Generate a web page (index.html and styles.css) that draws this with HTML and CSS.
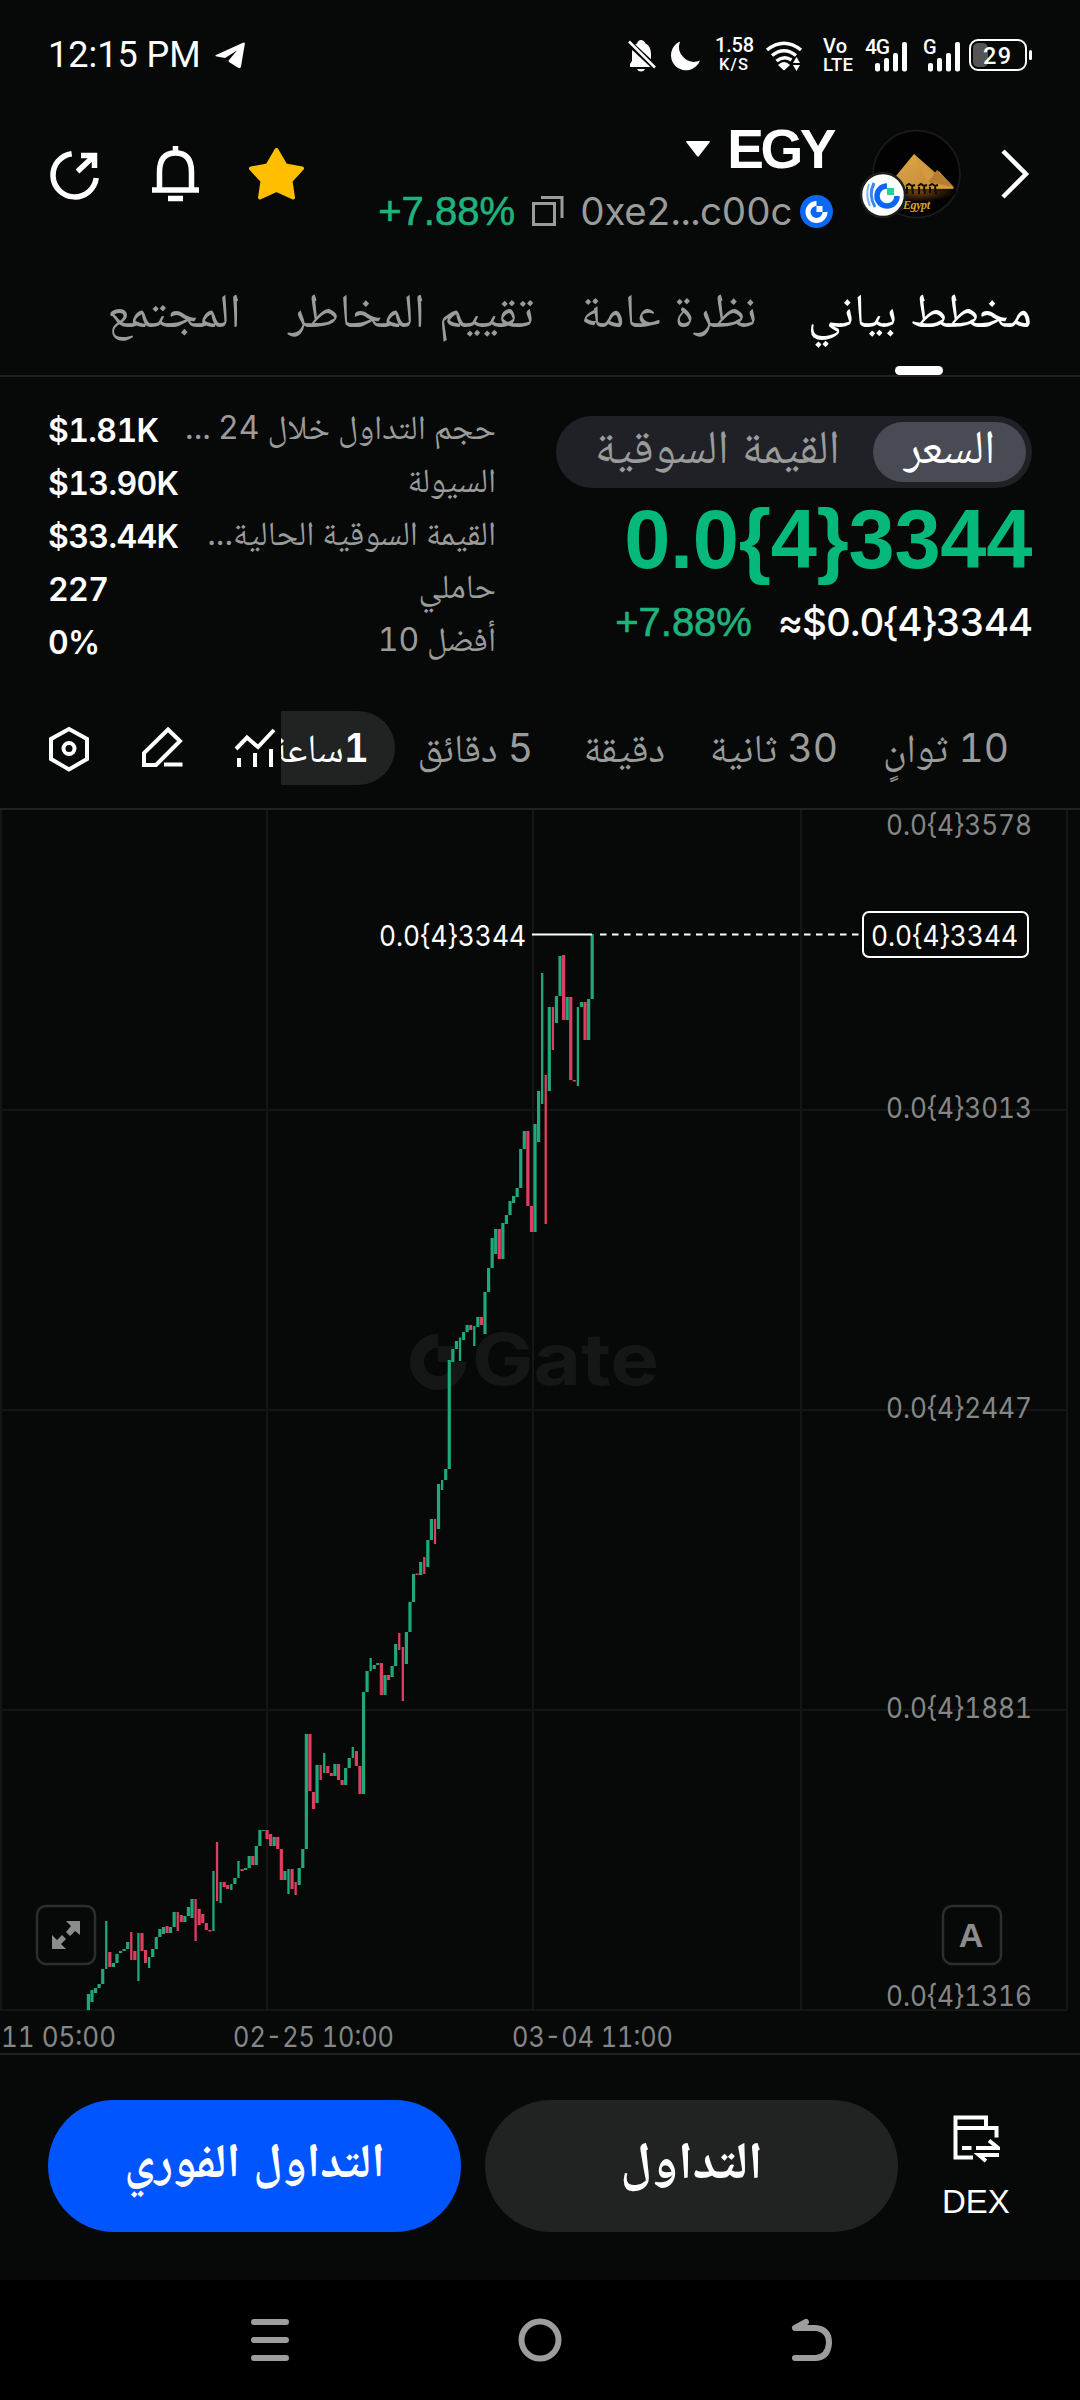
FILE: index.html
```html
<!DOCTYPE html>
<html lang="ar">
<head>
    <meta charset="UTF-8">
    <meta name="viewport" content="width=device-width, initial-scale=1.0">
    <title>EGY</title>
    <link rel="stylesheet" href="styles.css">
</head>
<body>
    <div class="status-bar">
        <span class="clock">12:15 PM</span>
        <svg class="telegram" width="30" height="27" viewBox="0 0 30 27"><path d="M1 13 L28 .8 Q30 0 29.8 2 L26 24.500 Q25.500 27 23 25.700 L14 20 Q13 19 14 18 L22 8.500 L10 16 L2 14.600 Q-.5 14 1 13Z" fill="#fff"/></svg>
        <svg class="status-icons" width="412" height="40" viewBox="624 34 412 40">
            <g fill="#fff">
                <path d="M630 66 V63 L632 60 V51 Q632 45 637 42.500 Q638 39 641 39 Q644 39 645.500 42.500 Q651 45 651 53 V60 L654 64 V66Z"/>
                <path d="M637 68 H645 Q644 70.500 641 70.500 Q638 70.500 637 68Z"/>
                <path d="M680 40.500 A15 15 0 1 0 700 59.500 A15 15 0 0 1 680 40.500Z"/>
                <path d="M778 64 Q784 58 790 64 L784 69.500Z"/>
                <path d="M796.500 56 L800 62 H793Z M796.500 70 L800 64 H793Z"/>
                <rect x="875" y="62" width="5" height="8.500" rx="2"/><rect x="884" y="57" width="5" height="13.500" rx="2"/><rect x="893" y="52" width="5" height="18.500" rx="2"/><rect x="902" y="41" width="5" height="29.500" rx="2"/>
                <rect x="928" y="62" width="5" height="8.500" rx="2"/><rect x="937" y="57" width="5" height="13.500" rx="2"/><rect x="946" y="52" width="5" height="18.500" rx="2"/><rect x="955" y="41" width="5" height="29.500" rx="2"/>
                <rect x="1029" y="49" width="3" height="10" rx="1.500"/>
            </g>
            <path d="M627 40 L656 67" stroke="#070908" stroke-width="6"/>
            <path d="M629 40.500 L655 66.500" stroke="#fff" stroke-width="2.500"/>
            <g fill="none" stroke="#fff" stroke-width="3.500">
                <path d="M767 49 Q784 35.500 801 49"/><path d="M772 54.500 Q784 45 796 54.500"/><path d="M776.500 60 Q784 54 791.500 59"/>
            </g>
            <rect x="973" y="42" width="15" height="24" rx="5" fill="#555"/>
            <rect x="970" y="39" width="56" height="30" rx="8" fill="none" stroke="#fff" stroke-width="2"/>
            <g class="status-text">
                <text x="715" y="51" font-size="20" textLength="39">1.58</text>
                <text x="719" y="69" font-size="16.500" textLength="29">K/S</text>
                <text x="823" y="52" font-size="20" textLength="24">Vo</text>
                <text x="823" y="70" font-size="18.500" textLength="30">LTE</text>
                <text x="865" y="53" font-size="21" textLength="25">4G</text>
                <text x="923" y="53" font-size="20">G</text>
                <text x="983" y="62.500" font-size="23.500" textLength="28">29</text>
            </g>
        </svg>
    </div>

    <header class="header">
        <svg class="actions" width="260" height="60" viewBox="48 144 260 60">
            <g fill="none" stroke="#fff" stroke-width="5.500">
                <path d="M71.700 153.700 A21.700 21.700 0 1 0 96.200 178"/>
                <path d="M77.500 171.500 L94 156"/><path d="M81 155.500 H94.500 V168"/>
                <path d="M159.500 190 V172 Q159.500 153 175.500 153 Q191.500 153 191.500 172 V190"/>
                <path d="M152 190 H199"/><path d="M168 198.500 H183"/><path d="M175.500 146 V153"/>
            </g>
            <path d="M276.500 150 L285.500 165.500 L302 168.500 L290.500 181 L293 197.500 L276.500 190 L260 197.500 L262.500 181 L251 168.500 L267.500 165.500Z" fill="#ffbf00" stroke="#ffbf00" stroke-width="4" stroke-linejoin="round"/>
        </svg>
        <div class="token">
            <div class="token-name">
                <svg width="24" height="16" viewBox="0 0 24 16"><path d="M1 0 H23 Q24.500 0 23.500 1.500 L13 15 Q12 16.300 11 15 L.5 1.500 Q-.5 0 1 0Z" fill="#fff"/></svg>
                <h1>EGY</h1>
            </div>
            <div class="token-info">
                <span class="change">+7.88%</span>
                <svg class="copy" width="32" height="31" viewBox="0 0 32 31"><path d="M1.500 7.500 H22.500 V28.500 H1.500Z M9 1.500 H30 V22" fill="none" stroke="#9a9c9b" stroke-width="3"/></svg>
                <span class="address">0xe2...c00c</span>
                <svg width="33" height="33" viewBox="0 0 33 33"><circle cx="16.500" cy="16.500" r="16.500" fill="#0a68f5"/><path d="M16.500 8.500 A8.500 8.500 0 1 0 25 17" fill="none" stroke="#fff" stroke-width="5"/><rect x="16.500" y="11" width="6" height="6" fill="#fff"/></svg>
            </div>
        </div>
        <svg class="avatar" width="102" height="94" viewBox="860 128 102 94">
            <defs>
                <linearGradient id="sand" x1="0" y1="0" x2="1" y2="1"><stop offset="0" stop-color="#e2ab4c"/><stop offset="1" stop-color="#bd8330"/></linearGradient>
                <radialGradient id="ground"><stop offset="0" stop-color="#6e4413"/><stop offset="1" stop-color="#000"/></radialGradient>
            </defs>
            <circle cx="916.500" cy="174" r="43.500" fill="#020202" stroke="#17191a" stroke-width="2"/>
            <ellipse cx="918" cy="192" rx="38" ry="10" fill="url(#ground)"/>
            <path d="M914 154 L891 182 V189 H954Z" fill="url(#sand)"/>
            <path d="M914 154 L930 188 H954 L939 171 L934 176Z" fill="#d39a40"/>
            <path d="M937 170 L928 182 L954 187Z" fill="#b67e30"/>
            <path d="M906 186 l3 -2 3 2 3 -1 M907 187 v7 M912 187 l1 7 M918 186 l3 -2 3 2 3 -1 M919 187 v7 M924 187 l1 7 M929 186 l3 -2 3 2 3 -1 M930 187 v6 M935 187 l1 7" fill="none" stroke="#120a02" stroke-width="2"/>
            <text class="avatar-text" x="903" y="209" textLength="27">Egypt</text>
            <circle cx="883" cy="195" r="22" fill="#fff" stroke="#1b1d1d" stroke-width="2.500"/>
            <g fill="none" stroke="#0a68f5">
                <path d="M869 184 Q865 195 870 206" stroke-width="2" opacity=".5"/>
                <path d="M874 183 Q868 195 875 207" stroke-width="3" opacity=".8"/>
                <path d="M887 186 A10 10 0 1 0 897 196" stroke-width="5.500"/>
            </g>
            <rect x="887" y="188" width="7" height="7" fill="#28cf95"/>
        </svg>
        <svg class="chevron" width="30" height="52" viewBox="0 0 30 52"><path d="M3 3 L26 26 L3 49" fill="none" stroke="#fff" stroke-width="4.500"/></svg>
    </header>

    <nav class="tabs">
        <a class="tab active" style="width: 223px">مخطط بياني</a>
        <a class="tab" style="width: 171px">نظرة عامة</a>
        <a class="tab" style="width: 241px">تقييم المخاطر</a>
        <a class="tab" style="width: 130px">المجتمع</a>
    </nav>

    <section class="summary">
        <div class="stats">
            <div class="stat"><b>$1.81K</b><span>حجم التداول خلال <i>24 ...</i></span></div>
            <div class="stat"><b>$13.90K</b><span>السيولة</span></div>
            <div class="stat"><b>$33.44K</b><span>القيمة السوقية الحالية<i>...</i></span></div>
            <div class="stat"><b>227</b><span>حاملي</span></div>
            <div class="stat"><b>0%</b><span>أفضل <i>10</i></span></div>
        </div>
        <div class="price-box">
            <div class="toggle">
                <span class="toggle-item active">السعر</span>
                <span class="toggle-item">القيمة السوقية</span>
            </div>
            <div class="price">0.0{4}3344</div>
            <div class="price-sub"><span class="change">+7.88%</span><span>≈$0.0{4}3344</span></div>
        </div>
    </section>

    <section class="toolbar">
        <svg class="tools" width="234" height="52" viewBox="46 722 234 52">
            <g fill="none" stroke="#fff" stroke-width="4">
                <path d="M69 729 L87 739 V759 L69 769.500 L51 759 V739Z"/><circle cx="69" cy="748.500" r="5.500"/>
                <path d="M168 729.500 L180 741 L156 765 H144 V753Z"/><path d="M164 764.500 H182.500"/>
                <path d="M236 749 L247 737.500 L258 747 L274 730"/><path d="M239 758 V767 M255 753 V767 M271 749 V767"/>
            </g>
        </svg>
        <div class="frames">
            <span class="frame" style="width: 120px"><i>10</i> ثوانٍ</span>
            <span class="frame" style="width: 122px"><i>30</i> ثانية</span>
            <span class="frame" style="width: 81px">دقيقة</span>
            <span class="frame" style="width: 110px"><i>5</i> دقائق</span>
            <span class="frame active"><i>1</i>ساعة</span>
        </div>
    </section>

    <section class="chart">
        <svg id="chart" width="1080" height="1243" viewBox="0 810 1080 1243">
            <path class="grid" d="M1 809 V2010 M267 809 V2010 M533 809 V2010 M801 809 V2010 M1067 809 V2010 M0 1110 H1067 M0 1410 H1067 M0 1710 H1067 M0 2010 H1067"/>
            <g class="watermark">
                <path d="M438 1341 A21 21 0 1 0 459 1362" fill="none" stroke="#151717" stroke-width="14"/>
                <rect x="438" y="1346" width="16" height="16"/>
                <text x="472" y="1385" textLength="187" lengthAdjust="spacingAndGlyphs">Gate</text>
            </g>
            <g id="candles"></g>
            <path d="M532 934.500 H592" stroke="#fff" stroke-width="2"/>
            <path d="M600 934.500 H860" stroke="#fff" stroke-width="2" stroke-dasharray="6.500 5.500"/>
            <rect x="863" y="912" width="165" height="45" rx="6" fill="#070908" stroke="#fff" stroke-width="2"/>
            <g class="axis">
                <text x="886" y="835" textLength="146" lengthAdjust="spacingAndGlyphs">0.0{4}3578</text>
                <text x="886" y="1118" textLength="146" lengthAdjust="spacingAndGlyphs">0.0{4}3013</text>
                <text x="886" y="1418" textLength="146" lengthAdjust="spacingAndGlyphs">0.0{4}2447</text>
                <text x="886" y="1718" textLength="146" lengthAdjust="spacingAndGlyphs">0.0{4}1881</text>
                <text x="886" y="2006" textLength="146" lengthAdjust="spacingAndGlyphs">0.0{4}1316</text>
                <text x="1" y="2047" textLength="115" lengthAdjust="spacingAndGlyphs">11 05:00</text>
                <text x="233" y="2047" textLength="161" lengthAdjust="spacingAndGlyphs">02-25 10:00</text>
                <text x="512" y="2047" textLength="161" lengthAdjust="spacingAndGlyphs">03-04 11:00</text>
                <text class="last" x="871" y="945.500" textLength="147" lengthAdjust="spacingAndGlyphs">0.0{4}3344</text>
                <text class="last" x="379" y="946" textLength="147" lengthAdjust="spacingAndGlyphs">0.0{4}3344</text>
            </g>
            <g fill="#070908" stroke="#2c2e2e" stroke-width="2.500">
                <rect x="37" y="1906" width="58" height="58" rx="9"/>
                <rect x="943" y="1906" width="58" height="58" rx="9"/>
            </g>
            <path d="M66 1921 H80 V1935 L75 1931 L70 1936 L66 1932 L71 1926Z M52 1935 L57 1940 L62 1935 L66 1939 L61 1944 L66 1949 H52Z" fill="#8b8d8c"/>
            <text class="auto" x="971" y="1947">A</text>
        </svg>
    </section>

    <footer class="footer">
        <button class="btn instant">التداول الفوري</button>
        <button class="btn trade">التداول</button>
        <div class="dex">
            <svg width="48" height="50" viewBox="952 2114 48 50">
                <g fill="none" stroke="#fff" stroke-width="4">
                    <path d="M973 2157.500 H955.500 V2117.500 H986 V2128 M955.500 2128 H996.500 V2137.500"/>
                    <path d="M962 2148 H971.500"/><path d="M976 2148 H998 L989 2140.500"/><path d="M999 2155 H979 L986 2161"/>
                </g>
            </svg>
            <span>DEX</span>
        </div>
    </footer>

    <div class="nav-bar">
        <svg width="42" height="44" viewBox="-1 0 42 44"><path d="M4 4 H36 M4 22 H36 M4 40 H36" fill="none" stroke="#9d9d9d" stroke-width="6" stroke-linecap="round"/></svg>
        <svg width="42" height="44" viewBox="0 0 42 44"><circle cx="21" cy="22" r="18.500" fill="none" stroke="#9d9d9d" stroke-width="6"/></svg>
        <svg width="42" height="44" viewBox="-2 0 42 44"><path d="M15 4 L4 10 H24 Q38 11 38 25 Q37 39 25 40 H4" fill="none" stroke="#9d9d9d" stroke-width="6" stroke-linecap="round" stroke-linejoin="round"/></svg>
    </div>

    <script src="chart.js"></script>
</body>
</html>
```

FILE: chart.js
```js
// [up, top, bottom, thin]
const candles = [
    [1,1994,2010],[1,1990,2002],[1,1988,1993],[1,1984,1988],[1,1969,1984],[1,1921,1969,1],[0,1952,1967],[1,1963,1967],[1,1954,1963],[1,1951,1953],
    [1,1949,1951],[1,1942,1949],[0,1932,1960,1],[0,1951,1960],[1,1933,1981,1],[0,1933,1951],[0,1950,1963],[1,1957,1968,1],[1,1949,1957],[1,1937,1949],
    [1,1929,1937],[1,1927,1934],[0,1926,1933],[1,1927,1933],[1,1912,1927],[0,1912,1931,1],[0,1915,1922],[1,1916,1922],[1,1907,1916],[1,1899,1918],
    [0,1899,1941,1],[0,1909,1925],[0,1914,1923],[0,1923,1930],[0,1930,1931.5],[1,1871,1931,1],[0,1842,1901,1],[1,1882,1903,1],[0,1882,1887],[0,1885,1889],
    [1,1884,1890,1],[1,1878,1884],[1,1861,1878,1],[0,1869,1871],[1,1868,1870],[1,1856,1868],[0,1856,1865],[1,1846,1865],[1,1830,1846],[1,1830,1831],
    [0,1830,1839],[0,1834,1846],[1,1837,1846],[0,1837,1849],[0,1849,1880],[1,1871,1880],[1,1869,1894,1],[0,1869,1889],[0,1882,1895,1],[1,1868,1885],
    [1,1849,1868],[1,1734,1849],[0,1734,1791],[0,1792,1809],[1,1765,1803],[0,1765,1780,1],[1,1753,1773,1],[0,1766,1773],[0,1773,1776],[1,1764,1776],
    [0,1764,1780],[0,1780,1785],[1,1768,1785],[1,1758,1768],[1,1747,1758,1],[0,1751,1766],[0,1766,1794],[1,1692,1794],[1,1671,1692],[1,1658,1671,1],
    [1,1665,1669],[1,1663,1665],[0,1663,1695],[1,1675,1695],[0,1675,1680],[1,1666,1677],[1,1644,1666],[0,1633,1650,1],[0,1647,1701,1],[1,1632,1664],
    [1,1602,1632],[1,1574,1602],[0,1573.5,1575],[1,1562,1575],[0,1557,1574,1],[1,1540,1567],[1,1519,1540],[0,1519,1544,1],[1,1484,1529],[1,1480,1490,1],
    [1,1469,1480],[1,1360,1469],[1,1349,1362],[1,1341,1349],[1,1337.5,1361,1],[1,1332,1340],[1,1325,1332],[0,1325,1330],[1,1326,1346,1],[1,1317,1327],
    [0,1317,1325],[1,1292,1334],[1,1268,1292],[1,1238,1268],[1,1229,1254],[0,1229,1259],[1,1223,1259],[1,1215,1224],[1,1201,1215],[1,1196,1203],
    [1,1188,1197],[1,1149,1188],[1,1131,1149],[0,1131,1206],[0,1206,1232],[1,1124,1232],[1,1091,1142],[1,973,1104,1],[0,1075,1224,1],[1,1007,1091],
    [0,1007,1050,1],[1,996,1023],[1,956,996],[0,955,1020],[1,997,1020],[0,997,1080],[0,1080,1081.5],[1,1007,1086,1],[1,1002,1007],[0,1002,1040],
    [1,999,1040],[1,934,999]
];

const group = document.getElementById("candles");

candles.forEach(([up, top, bottom, thin], i) => {
    const width = thin ? 2.3 : 3.2;
    const rect = document.createElementNS("http://www.w3.org/2000/svg", "rect");
    rect.setAttribute("x", (88.4 + i * 3.573 - width / 2).toFixed(2));
    rect.setAttribute("y", top);
    rect.setAttribute("width", width);
    rect.setAttribute("height", bottom - top);
    rect.setAttribute("class", up ? "up" : "down");
    group.appendChild(rect);
});
```

FILE: styles.css
```css
* {
    box-sizing: border-box;
}

body {
    margin: 0;
    width: 1080px;
    height: 2400px;
    background: #070908;
    color: #fff;
    font-family: "Liberation Sans", "Noto Naskh Arabic", "Noto Sans Arabic", "DejaVu Sans", sans-serif;
    display: flex;
    flex-direction: column;
    overflow: hidden;
}

svg {
    display: block;
    flex: none;
}

/* Numbers inside arabic labels */
i {
    font-family: Inter, sans-serif;
    font-style: normal;
    font-feature-settings: "tnum";
}

/* Status bar */
.status-bar {
    height: 110px;
    padding: 0 44px 0 48px;
    display: flex;
    align-items: center;
}

.clock {
    width: 167px;
    font-family: Roboto, sans-serif;
    font-size: 36px;
}

.status-icons {
    margin-left: auto;
    overflow: visible;
}

.status-text {
    font-family: Roboto, sans-serif;
    font-weight: 500;
    fill: #fff;
}

/* Header */
.header {
    height: 142px;
    padding: 0 50px 0 48px;
    display: flex;
    align-items: flex-start;
}

.actions {
    margin-top: 34px;
}

.token {
    margin-left: auto;
    margin-top: 8px;
    display: flex;
    flex-direction: column;
    align-items: flex-end;
}

.token-name {
    display: flex;
    align-items: center;
    gap: 17px;
    height: 62px;
}

h1 {
    margin: 0;
    font-size: 55px;
    letter-spacing: -3.5px;
}

.token-info {
    display: flex;
    align-items: center;
    height: 62px;
    font-family: Inter, sans-serif;
    font-feature-settings: "tnum";
    font-size: 38.500px;
    letter-spacing: -0.5px;
}

.change {
    color: #1fb27d;
    font-family: "Liberation Sans", sans-serif;
    font-size: 40px;
    font-weight: normal;
    letter-spacing: 0;
    -webkit-text-stroke: 0.6px #1fb27d;
}

.copy {
    margin: 0 16px 0 17px;
}

.address {
    color: #9a9c9b;
    margin-right: 8px;
}

.avatar {
    margin: 18px 0 0 27px;
}

.avatar-text {
    font-family: "Liberation Serif", serif;
    font-size: 12px;
    font-style: italic;
    font-weight: bold;
    fill: #d8a52b;
}

.chevron {
    margin: 38px 0 0 38px;
}

/* Tabs */
.tabs {
    direction: rtl;
    height: 125px;
    padding-right: 48px;
    display: flex;
    gap: 52px;
    border-bottom: 2px solid #202222;
}

.tab {
    position: relative;
    color: #9a9c9b;
    font-size: 48.200px;
    line-height: 116px;
    white-space: nowrap;
}

.tab.active {
    color: #fff;
}

.tab.active::after {
    content: "";
    position: absolute;
    left: 86px;
    bottom: 0;
    width: 48px;
    height: 9px;
    border-radius: 5px;
    background: #fff;
}

/* Summary */
.summary {
    height: 317px;
    padding: 27px 48px 0;
    display: flex;
    justify-content: space-between;
}

.stats {
    width: 448px;
}

.stat {
    height: 53px;
    display: flex;
    justify-content: space-between;
    align-items: center;
}

.stat b {
    font-family: Inter, sans-serif;
    font-feature-settings: "tnum";
    font-weight: 600;
    font-size: 32px;
    letter-spacing: -0.6px;
}

.stat span {
    direction: rtl;
    color: #9a9c9b;
    font-size: 34px;
    line-height: 47px;
    margin-bottom: 6px;
    word-spacing: -1.5px;
    white-space: nowrap;
}

.stat i {
    font-size: 32px;
    letter-spacing: -0.7px;
}

.price-box {
    width: 476px;
    padding-top: 12px;
}

.toggle {
    direction: rtl;
    height: 72px;
    padding: 6px;
    display: flex;
    border-radius: 36px;
    background: #202126;
}

.toggle-item {
    flex: 1;
    color: #9a9c9b;
    font-size: 47.500px;
    line-height: 50px;
    text-align: center;
    white-space: nowrap;
}

.toggle-item.active {
    flex: 0 0 153px;
    color: #fff;
    border-radius: 30px;
    background: #484a54;
}

.price {
    color: #05b97a;
    font-size: 83px;
    font-weight: bold;
    letter-spacing: -0.3px;
    line-height: 94px;
    margin-top: 5px;
    text-align: right;
    white-space: nowrap;
}

.price-sub {
    display: flex;
    justify-content: flex-end;
    align-items: baseline;
    gap: 26px;
    margin-top: 12px;
    font-family: Inter, sans-serif;
    font-feature-settings: "tnum";
    font-size: 38.500px;
    font-weight: 500;
    letter-spacing: -0.9px;
}

/* Toolbar */
.toolbar {
    height: 116px;
    padding-left: 46px;
    display: flex;
    align-items: flex-start;
    border-bottom: 2px solid #202222;
}

.tools {
    margin-top: 28px;
}

.frames {
    direction: rtl;
    width: 800px;
    padding: 17px 71px 0 0;
    margin-left: 1px;
    display: flex;
    gap: 51px;
    overflow: hidden;
}

.frame {
    flex: none;
    height: 74px;
    color: #9a9c9b;
    font-size: 40px;
    line-height: 74px;
    word-spacing: -1px;
    white-space: nowrap;
}

.frame i {
    font-size: 39px;
    letter-spacing: -0.8px;
}

.frame.active {
    width: 150px;
    margin-right: -23px;
    padding-right: 26px;
    color: #fff;
    border-radius: 37px;
    background: #212322;
}

.frame.active i {
    font-weight: 600;
}

/* Chart */
.grid {
    fill: none;
    stroke: #141616;
    stroke-width: 2;
}

.watermark {
    fill: #151717;
    font-family: Inter, sans-serif;
    font-size: 72px;
    font-weight: 700;
}

.up {
    fill: #1fa97a;
}

.down {
    fill: #dc3f60;
}

.axis {
    fill: #858786;
    font-family: Inter, sans-serif;
    font-feature-settings: "tnum";
    font-size: 28.500px;
}

.last {
    fill: #fff;
}

.auto {
    fill: #8b8d8c;
    font-size: 34px;
    font-weight: bold;
    text-anchor: middle;
}

/* Footer */
.footer {
    height: 227px;
    padding: 45px 48px 0;
    display: flex;
    align-items: flex-start;
    gap: 24px;
    border-top: 2px solid #202222;
}

.btn {
    width: 413px;
    height: 132px;
    padding: 0;
    border: none;
    border-radius: 66px;
    color: #fff;
    background: #212322;
    font-family: inherit;
    font-size: 52px;
    font-weight: bold;
}

.btn.instant {
    background: #0055ff;
    font-size: 48px;
}

.dex {
    margin: 14px 0 0 20px;
    display: flex;
    flex-direction: column;
    align-items: center;
    font-size: 33px;
}

.dex span {
    margin-top: 19px;
}

/* Bottom navigation */
.nav-bar {
    height: 120px;
    padding: 0 249px;
    display: flex;
    justify-content: space-between;
    align-items: center;
    background: #000;
}

.nav-bar svg {
    overflow: visible;
}
```
